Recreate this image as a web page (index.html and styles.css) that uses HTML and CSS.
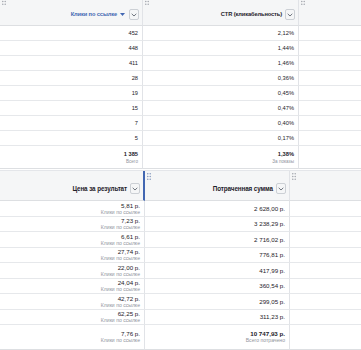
FILE: index.html
```html
<!DOCTYPE html>
<html>
<head>
<meta charset="utf-8">
<link rel="stylesheet" href="styles.css">
</head>
<body>
<div class="sheet sheet-top">
  <div class="cell head c1"><span class="grip g-up"><svg width="4" height="7" viewBox="0 0 4 7"><circle cx="0.8" cy="0.8" r="0.7"/><circle cx="3.2" cy="0.8" r="0.7"/><circle cx="0.8" cy="3.5" r="0.7"/><circle cx="3.2" cy="3.5" r="0.7"/><circle cx="0.8" cy="6.2" r="0.7"/><circle cx="3.2" cy="6.2" r="0.7"/></svg></span><span class="htext blue">Клики по ссылке</span><span class="sort"><svg width="5" height="3" viewBox="0 0 5 3"><path d="M0 0 L5 0 L2.5 3 Z" fill="#4267b2"/></svg></span><span class="dd"><svg width="6" height="4" viewBox="0 0 6 4"><path d="M0.7 0.8 L3 3 L5.3 0.8" fill="none" stroke="#606770" stroke-width="0.9"/></svg></span></div>
  <div class="cell head"><span class="grip g-up"><svg width="4" height="7" viewBox="0 0 4 7"><circle cx="0.8" cy="0.8" r="0.7"/><circle cx="3.2" cy="0.8" r="0.7"/><circle cx="0.8" cy="3.5" r="0.7"/><circle cx="3.2" cy="3.5" r="0.7"/><circle cx="0.8" cy="6.2" r="0.7"/><circle cx="3.2" cy="6.2" r="0.7"/></svg></span><span class="htext">CTR (кликабельность)</span><span class="dd"><svg width="6" height="4" viewBox="0 0 6 4"><path d="M0.7 0.8 L3 3 L5.3 0.8" fill="none" stroke="#606770" stroke-width="0.9"/></svg></span></div>
  <div class="cell head last"><span class="grip g-up"><svg width="4" height="7" viewBox="0 0 4 7"><circle cx="0.8" cy="0.8" r="0.7"/><circle cx="3.2" cy="0.8" r="0.7"/><circle cx="0.8" cy="3.5" r="0.7"/><circle cx="3.2" cy="3.5" r="0.7"/><circle cx="0.8" cy="6.2" r="0.7"/><circle cx="3.2" cy="6.2" r="0.7"/></svg></span></div>

  <div class="cell num">452</div><div class="cell num">2,12%</div><div class="cell last"></div>
  <div class="cell num">448</div><div class="cell num">1,44%</div><div class="cell last"></div>
  <div class="cell num">411</div><div class="cell num">1,46%</div><div class="cell last"></div>
  <div class="cell num">28</div><div class="cell num">0,36%</div><div class="cell last"></div>
  <div class="cell num">19</div><div class="cell num">0,45%</div><div class="cell last"></div>
  <div class="cell num">15</div><div class="cell num">0,47%</div><div class="cell last"></div>
  <div class="cell num">7</div><div class="cell num">0,40%</div><div class="cell last"></div>
  <div class="cell num">5</div><div class="cell num">0,17%</div><div class="cell last"></div>

  <div class="cell num total"><b>1 385</b><span class="sub">Всего</span></div>
  <div class="cell num total"><b>1,38%</b><span class="sub">За показы</span></div>
  <div class="cell total last"></div>
</div>

<div class="sheet sheet-bottom">
  <div class="cell head c1 active"><span class="htext big">Цена за результат</span><span class="dd"><svg width="6" height="4" viewBox="0 0 6 4"><path d="M0.7 0.8 L3 3 L5.3 0.8" fill="none" stroke="#606770" stroke-width="0.9"/></svg></span></div>
  <div class="cell head"><span class="grip g-low blue-grip"><svg width="4" height="7" viewBox="0 0 4 7"><circle cx="0.8" cy="0.8" r="0.7"/><circle cx="3.2" cy="0.8" r="0.7"/><circle cx="0.8" cy="3.5" r="0.7"/><circle cx="3.2" cy="3.5" r="0.7"/><circle cx="0.8" cy="6.2" r="0.7"/><circle cx="3.2" cy="6.2" r="0.7"/></svg></span><span class="htext big">Потраченная сумма</span><span class="dd"><svg width="6" height="4" viewBox="0 0 6 4"><path d="M0.7 0.8 L3 3 L5.3 0.8" fill="none" stroke="#606770" stroke-width="0.9"/></svg></span></div>
  <div class="cell head last"><span class="grip g-low"><svg width="4" height="7" viewBox="0 0 4 7"><circle cx="0.8" cy="0.8" r="0.7"/><circle cx="3.2" cy="0.8" r="0.7"/><circle cx="0.8" cy="3.5" r="0.7"/><circle cx="3.2" cy="3.5" r="0.7"/><circle cx="0.8" cy="6.2" r="0.7"/><circle cx="3.2" cy="6.2" r="0.7"/></svg></span></div>

  <div class="cell num two"><span>5,81 р.</span><span class="sub">Клики по ссылке</span></div><div class="cell num">2 628,00 р.</div><div class="cell last"></div>
  <div class="cell num two"><span>7,23 р.</span><span class="sub">Клики по ссылке</span></div><div class="cell num">3 238,29 р.</div><div class="cell last"></div>
  <div class="cell num two"><span>6,61 р.</span><span class="sub">Клики по ссылке</span></div><div class="cell num">2 716,02 р.</div><div class="cell last"></div>
  <div class="cell num two"><span>27,74 р.</span><span class="sub">Клики по ссылке</span></div><div class="cell num">776,81 р.</div><div class="cell last"></div>
  <div class="cell num two"><span>22,00 р.</span><span class="sub">Клики по ссылке</span></div><div class="cell num">417,99 р.</div><div class="cell last"></div>
  <div class="cell num two"><span>24,04 р.</span><span class="sub">Клики по ссылке</span></div><div class="cell num">360,54 р.</div><div class="cell last"></div>
  <div class="cell num two"><span>42,72 р.</span><span class="sub">Клики по ссылке</span></div><div class="cell num">299,05 р.</div><div class="cell last"></div>
  <div class="cell num two"><span>62,25 р.</span><span class="sub">Клики по ссылке</span></div><div class="cell num">311,23 р.</div><div class="cell last"></div>

  <div class="cell num total"><span>7,76 р.</span><span class="sub">Клики по ссылке</span></div>
  <div class="cell num total"><b>10 747,93 р.</b><span class="sub">Всего потрачено</span></div>
  <div class="cell total last"></div>
</div>
</body>
</html>
```
FILE: styles.css
```css
html, body {
  margin: 0;
  padding: 0;
  background: #ffffff;
}
body {
  font-family: "Liberation Sans", Arial, sans-serif;
  color: #1d2129;
  width: 361px;
  height: 350px;
  overflow: hidden;
}
.sheet {
  display: grid;
}
.sheet-top {
  grid-template-columns: 143px 156px 1fr;
  grid-template-rows: 26px repeat(8, 15px) 23px;
  font-size: 5.7px;
}
.sheet-bottom {
  margin-top: 1px;
  grid-template-columns: 145px 145px 1fr;
  grid-template-rows: 30px repeat(8, 15.5px) 25px;
  font-size: 6.2px;
  border-top: 1px solid #e4e6ea;
}
.cell {
  position: relative;
  box-sizing: border-box;
  border-right: 1px solid #e1e3e7;
  border-bottom: 1px solid #e6e8eb;
  display: flex;
  align-items: center;
  justify-content: flex-end;
  padding-right: 4px;
  min-width: 0;
  white-space: nowrap;
}
.cell.last {
  border-right: none;
}
.head {
  background: #f5f6f7;
  border-bottom-color: #dddfe2;
  align-items: flex-end;
  padding-right: 3px;
  padding-bottom: 5px;
  gap: 2px;
}
.sheet-bottom .head {
  padding-bottom: 6px;
}
.head.active {
  border-right: 2px solid #4267b2;
  padding-right: 3px;
}
.htext {
  font-weight: bold;
  color: #1d2129;
  line-height: 11px;
  letter-spacing: -0.1px;
}
.htext.big {
  font-size: 6.3px;
}
.htext.blue {
  color: #4267b2;
}
.sort {
  height: 11px;
  display: flex;
  align-items: center;
  margin: 0 1px 0 1px;
}
.sort svg {
  display: block;
}
.dd {
  width: 10px;
  height: 11px;
  box-sizing: border-box;
  border: 1px solid #ccd0d5;
  border-radius: 2px;
  background: #f5f6f7;
  display: flex;
  align-items: center;
  justify-content: center;
  margin-left: 1px;
}
.dd svg {
  display: block;
}
.grip {
  position: absolute;
  left: 2px;
  top: 1px;
  fill: #9a9ea6;
  line-height: 0;
}
.grip.g-up {
  top: -2px;
}
.grip.g-low {
  top: 2px;
  left: 2px;
}
.blue-grip {
  fill: #7b8fb8;
}
.num {
  color: #1d2129;
}
.two, .total {
  flex-direction: column;
  align-items: flex-end;
  justify-content: center;
  line-height: 7px;
}
.total {
  border-bottom-color: #dddfe2;
}
.sheet-top .total {
  padding-top: 1px;
}
.sub {
  font-size: 4.6px;
  color: #90949c;
  line-height: 7px;
}
.sheet-bottom .sub {
  font-size: 5.1px;
}
.two .sub {
  line-height: 6.5px;
}
b {
  font-weight: bold;
}
```
